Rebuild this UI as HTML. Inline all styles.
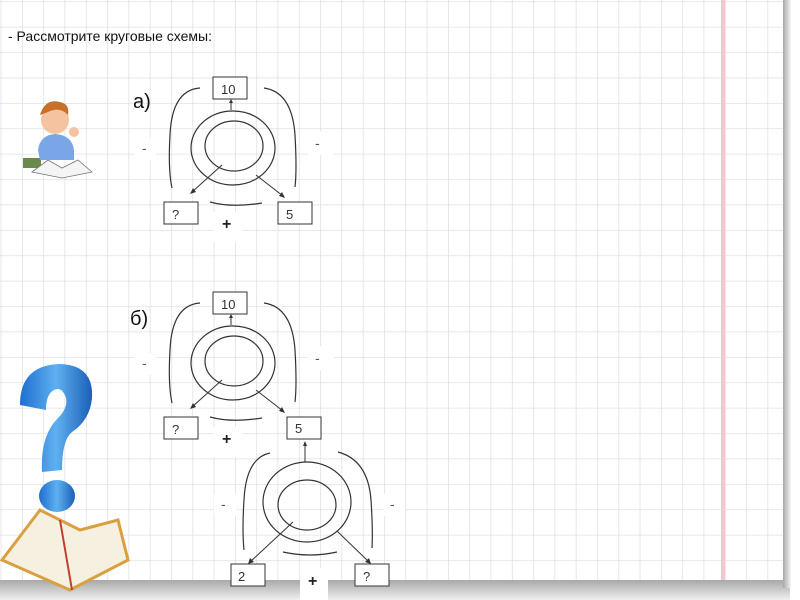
<!DOCTYPE html>
<html><head><meta charset="utf-8"><style>
html,body{margin:0;padding:0;width:800px;height:600px;overflow:hidden;background:#fff}
svg{display:block}
text{font-family:"Liberation Sans",sans-serif}
</style></head><body>
<svg width="800" height="600" viewBox="0 0 800 600" xmlns="http://www.w3.org/2000/svg">
<defs>
<pattern id="g" x="22" y="103" width="21.3" height="25.4" patternUnits="userSpaceOnUse">
<path d="M0 0V25.4M0 0H21.3" stroke="#d9d9e3" stroke-width="1.3" fill="none"/>
</pattern>
<linearGradient id="sb" x1="0" y1="0" x2="0" y2="1"><stop offset="0" stop-color="#a8a8a8"/><stop offset="1" stop-color="#f0f0f0"/></linearGradient>
<linearGradient id="sr" x1="0" y1="0" x2="1" y2="0"><stop offset="0" stop-color="#a8a8a8"/><stop offset="1" stop-color="#f4f4f4"/></linearGradient>
<linearGradient id="q" x1="0" y1="0" x2="1" y2="0"><stop offset="0" stop-color="#1e6fd0"/><stop offset="0.5" stop-color="#5fb0f0"/><stop offset="1" stop-color="#1a5fb8"/></linearGradient>
<g id="d">
<path d="M200 88 Q172 90 170 135 Q168 170 172 188" stroke="#333" stroke-width="1.2" fill="none"/>
<path d="M264 88 Q292 92 295 135 Q297 170 295 187" stroke="#333" stroke-width="1.2" fill="none"/>
<path d="M210 202 Q232 208 262 203" stroke="#333" stroke-width="1.2" fill="none"/>
<ellipse cx="233" cy="148" rx="42" ry="37" stroke="#333" stroke-width="1.2" fill="none"/>
<ellipse cx="234" cy="146" rx="29" ry="25" stroke="#333" stroke-width="1.2" fill="none"/>
<path d="M231 110V100" stroke="#333" stroke-width="1"/><path d="M229 103L231 99L233 103" fill="#333"/>
<path d="M222 165L192 192" stroke="#333" stroke-width="1"/><path d="M190 194L193 188L196 192Z" fill="#333"/>
<path d="M256 175L283 196" stroke="#333" stroke-width="1"/><path d="M285 198L279 196L282 192Z" fill="#333"/>
<rect x="213" y="77" width="34" height="22" fill="#fff" stroke="#333"/>
<rect x="164" y="202" width="34" height="22" fill="#fff" stroke="#333"/>
<rect x="134" y="138" width="22" height="22" fill="#fff"/>
<rect x="308" y="131" width="26" height="24" fill="#fff"/>
<rect x="213" y="212" width="30" height="30" fill="#fff"/>
<text x="142" y="153" font-size="14" fill="#555">-</text>
<text x="315" y="148" font-size="14" fill="#555">-</text>
<text x="222" y="229" font-size="16" font-weight="bold" fill="#222">+</text>
<text x="221" y="94" font-size="13" fill="#333">10</text>
<text x="172" y="219" font-size="13" fill="#333">?</text>
</g>
</defs>
<rect x="0" y="0" width="783" height="580" fill="url(#g)"/>
<rect x="0" y="580" width="790" height="20" fill="url(#sb)"/>
<rect x="783" y="0" width="8" height="588" fill="url(#sr)"/>
<rect x="721" y="0" width="4" height="580" fill="#f5c6cc"/>
<text x="8" y="41" font-size="14" fill="#111">- Рассмотрите круговые схемы:</text>
<text x="133" y="108" font-size="20" fill="#111">а)</text>
<text x="130" y="325" font-size="20" fill="#111">б)</text>
<use href="#d"/>
<rect x="278" y="202" width="34" height="22" fill="#fff" stroke="#333"/>
<text x="286" y="219" font-size="13" fill="#333">5</text>
<g transform="translate(0,215)"><use href="#d"/></g>
<rect x="287" y="417" width="34" height="22" fill="#fff" stroke="#333"/>
<text x="295" y="433" font-size="13" fill="#333">5</text>
<!-- third diagram -->
<g stroke="#333" stroke-width="1.2" fill="none">
<path d="M270 453 Q246 458 244 500 Q242 530 244 550"/>
<path d="M338 452 Q368 460 371 500 Q373 530 372 548"/>
<path d="M283 552 Q310 558 337 552"/>
<ellipse cx="307" cy="502" rx="44" ry="40"/>
<ellipse cx="307" cy="505" rx="29" ry="25"/>
</g>
<g stroke="#333" stroke-width="1">
<path d="M305 462V443"/><path d="M293 522L250 562"/><path d="M337 531L369 562"/>
</g>
<path d="M303 446L305 441L307 446Z" fill="#333"/>
<path d="M248 564L250 558L254 562Z" fill="#333"/>
<path d="M371 564L365 562L369 558Z" fill="#333"/>
<rect x="231" y="564" width="34" height="22" fill="#fff" stroke="#333"/>
<rect x="355" y="564" width="34" height="22" fill="#fff" stroke="#333"/>
<text x="238" y="581" font-size="13" fill="#333">2</text>
<text x="363" y="581" font-size="13" fill="#333">?</text>
<rect x="214" y="494" width="22" height="22" fill="#fff"/>
<rect x="383" y="494" width="22" height="22" fill="#fff"/>
<text x="221" y="509" font-size="14" fill="#555">-</text>
<text x="390" y="509" font-size="14" fill="#555">-</text>
<rect x="300" y="568" width="28" height="32" fill="#fff"/>
<text x="308" y="586" font-size="16" font-weight="bold" fill="#222">+</text>
<!-- boy -->
<g>
<rect x="23" y="158" width="18" height="10" fill="#6a8a4a"/>
<circle cx="55" cy="120" r="14" fill="#f5c3a0"/>
<path d="M40 115 Q45 98 60 102 Q70 104 68 115 Q60 106 48 112Z" fill="#c8702a"/>
<path d="M38 150 Q40 135 55 134 Q72 135 74 150 L74 160 L40 160Z" fill="#7aa6e8"/>
<path d="M32 172 L48 160 L62 168 L78 160 L92 172 L62 178Z" fill="#f4f4f4" stroke="#777" stroke-width="0.8"/>
<circle cx="74" cy="132" r="5" fill="#f5c3a0"/>
</g>
<!-- question mark + book -->
<path d="M2 560 L40 510 L80 530 L118 520 L128 560 L70 590 Z" fill="#f5f0e0" stroke="#d9a040" stroke-width="3"/>
<path d="M60 520 L72 590" stroke="#c04030" stroke-width="2"/>
<path d="M20 405 Q20 366 58 364 Q94 364 92 398 Q90 420 72 432 Q62 440 62 470 L42 472 Q40 436 58 418 Q68 408 66 398 Q62 386 54 390 Q46 394 46 410 Z" fill="url(#q)"/>
<ellipse cx="57" cy="496" rx="18" ry="16" fill="url(#q)"/>
</svg>
</body></html>
